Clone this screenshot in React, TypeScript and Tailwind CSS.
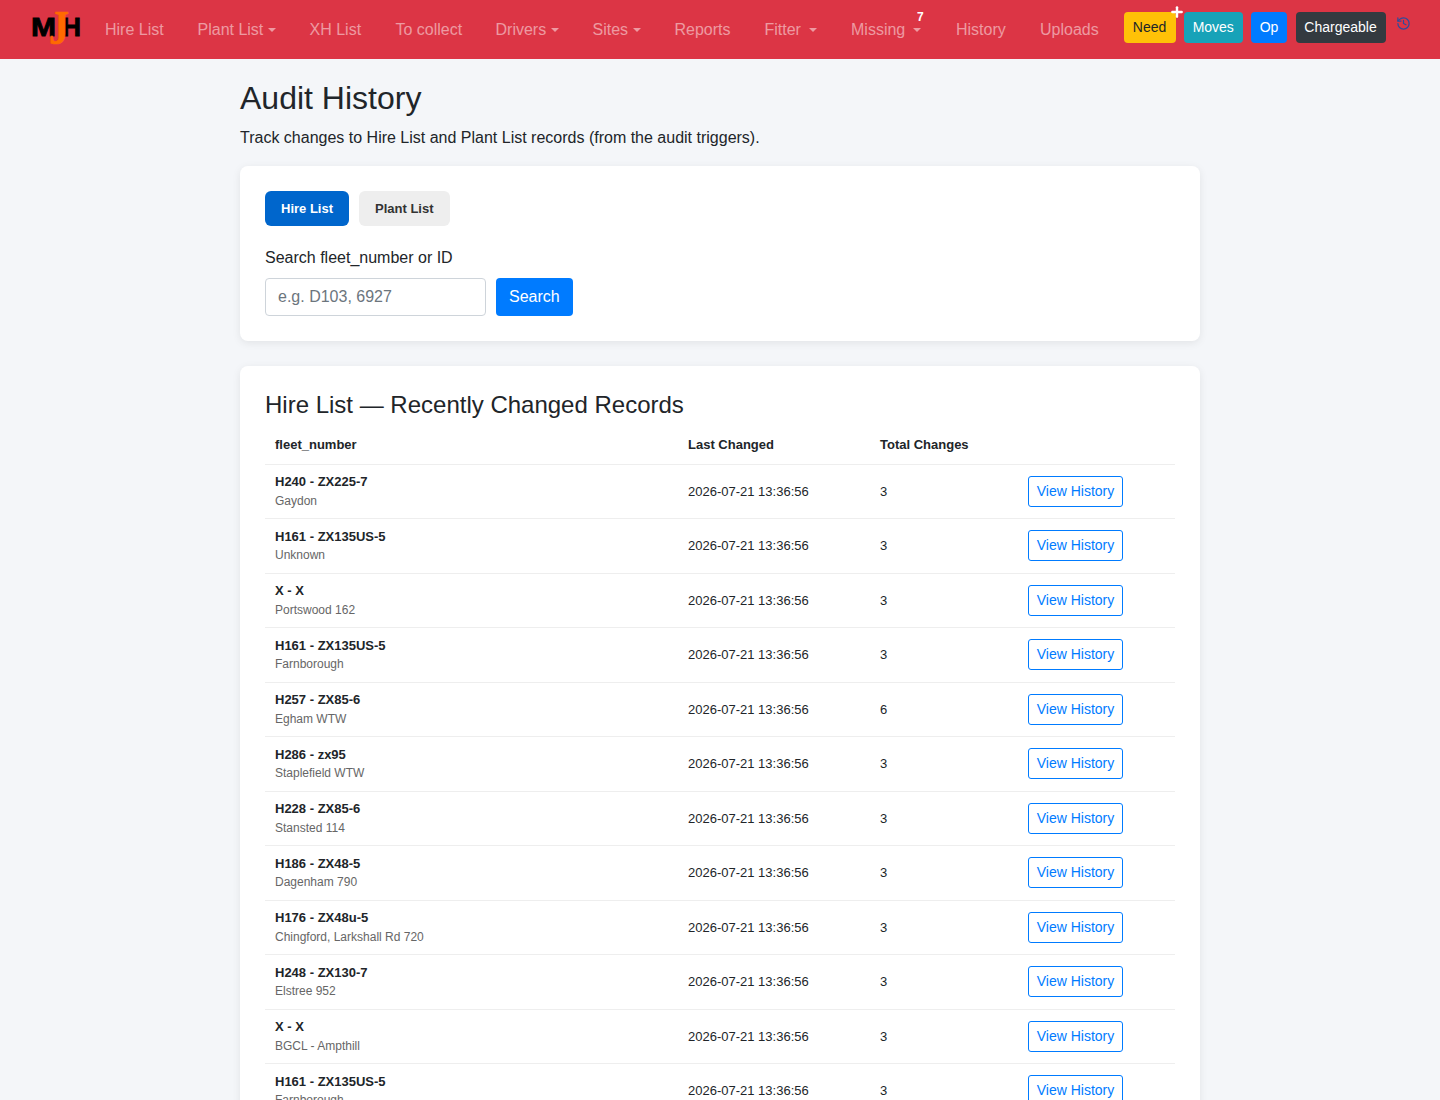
import { History, Plus } from "lucide-react";

const rows = [
  { fleet: "H240 - ZX225-7", site: "Gaydon", total: 3 },
  { fleet: "H161 - ZX135US-5", site: "Unknown", total: 3 },
  { fleet: "X - X", site: "Portswood 162", total: 3 },
  { fleet: "H161 - ZX135US-5", site: "Farnborough", total: 3 },
  { fleet: "H257 - ZX85-6", site: "Egham WTW", total: 6 },
  { fleet: "H286 - zx95", site: "Staplefield WTW", total: 3 },
  { fleet: "H228 - ZX85-6", site: "Stansted 114", total: 3 },
  { fleet: "H186 - ZX48-5", site: "Dagenham 790", total: 3 },
  { fleet: "H176 - ZX48u-5", site: "Chingford, Larkshall Rd 720", total: 3 },
  { fleet: "H248 - ZX130-7", site: "Elstree 952", total: 3 },
  { fleet: "X - X", site: "BGCL - Ampthill", total: 3 },
  { fleet: "H161 - ZX135US-5", site: "Farnborough", total: 3 },
];

function Logo() {
  return (
    <svg width="52" height="36" viewBox="0 0 52 36" className="shrink-0 block">
      <text x="0" y="24.5" fontFamily="Liberation Sans" fontWeight="700" fontSize="25" textLength="25" lengthAdjust="spacingAndGlyphs" fill="#000" stroke="#000" strokeWidth="0.8">
        M
      </text>
      <text x="31" y="24.5" fontFamily="Liberation Sans" fontWeight="700" fontSize="25" textLength="19" lengthAdjust="spacingAndGlyphs" fill="#000" stroke="#000" strokeWidth="0.8">
        H
      </text>
      <text x="18" y="33" fontFamily="Liberation Serif" fontWeight="700" fontSize="48" textLength="20" lengthAdjust="spacingAndGlyphs" fill="#ff6a00" stroke="#ff6a00" strokeWidth="0.7">
        J
      </text>
    </svg>
  );
}

function Caret({ className }: { className?: string }) {
  return <span className={`inline-block align-middle border-x-[4px] border-t-[4px] border-x-transparent border-t-white/50 ${className ?? "ml-[5px]"}`} />;
}

function NavLink({ label, caret, wide, className }: { label: string; caret?: boolean; wide?: boolean; className?: string }) {
  return (
    <a className={`shrink-0 text-base text-white/50 whitespace-nowrap ${className ?? ""}`}>
      {label}
      {caret && <Caret className={wide ? "ml-[8px]" : undefined} />}
    </a>
  );
}

function NavButton({ label, className }: { label: string; className: string }) {
  return <a className={`h-[31px] flex items-center justify-center rounded-[4px] text-sm ${className}`}>{label}</a>;
}

function Navbar() {
  return (
    <nav className="h-[59px] bg-[#dc3545] flex items-center pl-[31px]">
      <div className="mr-[22px] mt-[-1px]">
        <Logo />
      </div>
      <div className="flex items-center">
        <NavLink label="Hire List" className="w-[92.5px]" />
        <NavLink label="Plant List" caret className="w-[112px]" />
        <NavLink label="XH List" className="w-[86px]" />
        <NavLink label="To collect" className="w-[100px]" />
        <NavLink label="Drivers" caret className="w-[97px]" />
        <NavLink label="Sites" caret className="w-[82px]" />
        <NavLink label="Reports" className="w-[90px]" />
        <NavLink label="Fitter" caret wide className="w-[86.5px]" />
        <div className="relative w-[105px] shrink-0">
          <NavLink label="Missing" caret wide />
          <span className="absolute left-[66px] top-[-9px] text-xs font-bold text-white">7</span>
        </div>
        <NavLink label="History" className="w-[84px]" />
        <NavLink label="Uploads" className="w-[83.5px]" />
      </div>
      <div className="flex items-center gap-[8.5px] mt-[-5px]">
        <div className="relative">
          <NavButton label="Need" className="w-[52px] bg-[#ffc107] text-[#212529]" />
          <Plus className="absolute left-[45px] top-[-8px] text-white" size={16} strokeWidth={3.6} />
        </div>
        <NavButton label="Moves" className="w-[58.5px] bg-[#17a2b8] text-white" />
        <NavButton label="Op" className="w-[36px] bg-[#007bff] text-white" />
        <NavButton label="Chargeable" className="w-[90px] bg-[#343a40] text-white" />
      </div>
      <History className="ml-[10px] mb-[13px] text-[#2f4b9b]" size={15} strokeWidth={2} />
    </nav>
  );
}

function Card({ children, className }: { children: React.ReactNode; className?: string }) {
  return <section className={`bg-white rounded-lg p-[25px] shadow-[0_2px_8px_rgba(0,0,0,0.08)] ${className ?? ""}`}>{children}</section>;
}

export default function App() {
  return (
    <div className="h-screen overflow-hidden bg-[#f4f6f9] text-[#212529] font-['Liberation_Sans',Arial,sans-serif]">
      <Navbar />

      <main className="w-[960px] mx-auto pt-[19px]">
        <h1 className="text-[32px] leading-[40px] font-normal">Audit History</h1>
        <p className="text-base leading-6 mt-[8px]">Track changes to Hire List and Plant List records (from the audit triggers).</p>

        {/* Search card */}
        <Card className="mt-[16px] h-[175px]">
          <div className="flex gap-[10px]">
            <button className="h-[35px] px-4 rounded-md bg-[#0066cc] text-white text-[13px] font-bold">Hire List</button>
            <button className="h-[35px] px-4 rounded-md bg-[#eeeeee] text-[#333333] text-[13px] font-bold">Plant List</button>
          </div>
          <label className="block text-base leading-6 mt-[20px]">Search fleet_number or ID</label>
          <div className="flex gap-[10px] mt-[8px]">
            <input
              placeholder="e.g. D103, 6927"
              className="w-[221px] h-[38px] px-3 rounded-[4px] border border-[#ced4da] bg-white text-base placeholder:text-[#6c757d] outline-none"
            />
            <button className="h-[38px] px-[13px] rounded-[4px] bg-[#007bff] text-white text-base">Search</button>
          </div>
        </Card>

        {/* Results card */}
        <Card className="mt-[25px]">
          <h2 className="text-2xl leading-[27px] font-normal">Hire List — Recently Changed Records</h2>
          <table className="w-[910px] table-fixed border-collapse mt-[8px] text-[13px]">
            <colgroup>
              <col className="w-[413px]" />
              <col className="w-[192px]" />
              <col className="w-[148px]" />
              <col className="w-[157px]" />
            </colgroup>
            <thead>
              <tr className="h-[38px] border-b border-[#eeeeee] text-left">
                <th className="px-[10px] font-bold">fleet_number</th>
                <th className="px-[10px] font-bold">Last Changed</th>
                <th className="px-[10px] font-bold">Total Changes</th>
                <th className="px-[10px]" />
              </tr>
            </thead>
            <tbody>
              {rows.map((row, i) => (
                <tr key={i} className="h-[54.5px] border-b border-[#eeeeee]">
                  <td className="px-[10px]">
                    <div className="font-bold leading-[20.8px]">{row.fleet}</div>
                    <div className="text-xs leading-[17.5px] mt-[0.2px] text-[#666666]">{row.site}</div>
                  </td>
                  <td className="px-[10px]">2026-07-21 13:36:56</td>
                  <td className="px-[10px]">{row.total}</td>
                  <td className="px-[10px]">
                    <button className="block w-[95px] h-[31px] pb-[0.6px] rounded-[3px] border border-[#007bff] text-[#007bff] text-sm">View History</button>
                  </td>
                </tr>
              ))}
            </tbody>
          </table>
        </Card>
      </main>
    </div>
  );
}
